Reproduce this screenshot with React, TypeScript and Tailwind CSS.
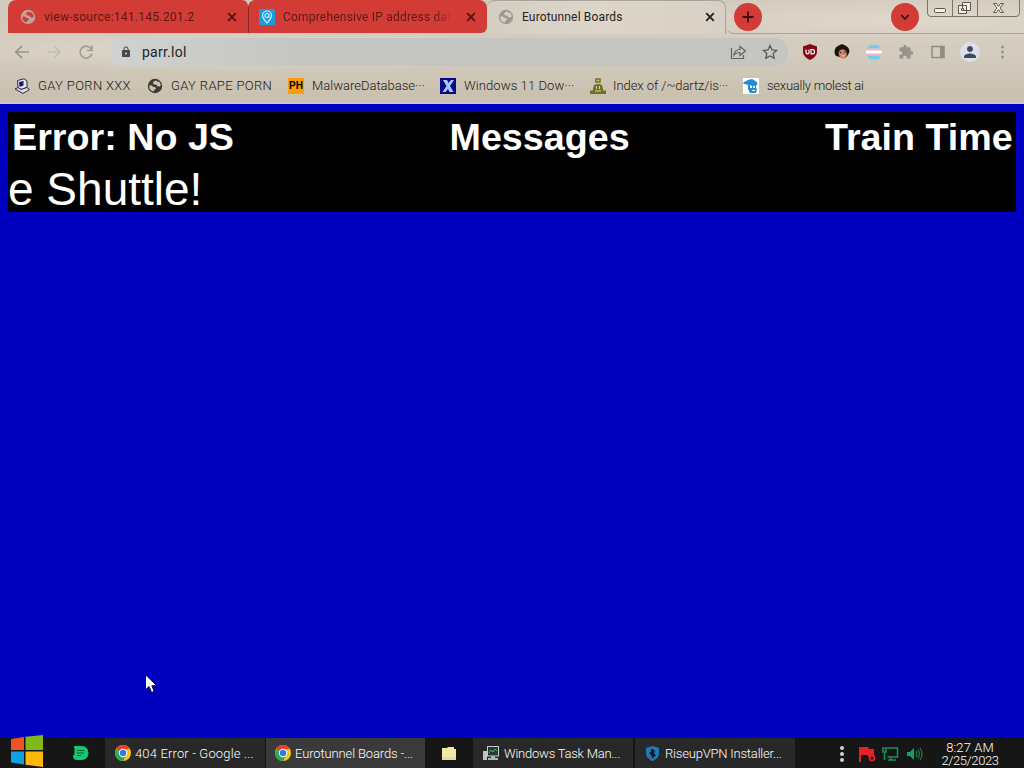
import React from "react";
import { MdExtension, MdPerson, MdLock } from "react-icons/md";

interface TextProps {
  children: React.ReactNode;
  className?: string;
}

function Label({ children, className = "" }: TextProps) {
  return (
    <span className={`block shrink-0 whitespace-nowrap ${className}`}>
      {children}
    </span>
  );
}

function CloseIcon({ className = "" }: { className?: string }) {
  return (
    <svg className={`w-[10px] h-[10px] shrink-0 ${className}`} viewBox="0 0 10 10" stroke="currentColor" strokeWidth="1.8">
      <path d="M1.2 1.2l7.6 7.6M8.8 1.2l-7.6 7.6" />
    </svg>
  );
}

function GlobeIcon({ className = "" }: { className?: string }) {
  return (
    <svg className={`w-4 h-4 shrink-0 ${className}`} viewBox="0 0 16 16" fill="currentColor">
      <path
        fillRule="evenodd"
        d="M8 .8a7.2 7.2 0 1 1 0 14.400A7.200 7.200 0 0 1 8 .8zM9.500 2.600L7 3.200 5.800 5.200l1.700 1.300 2 .2 1 1.600 2.200.2 1.100-1.200a5.700 5.700 0 0 0-2-3.800L10.500 4zM2.300 7.600a5.700 5.700 0 0 0 4.500 6l.4-1.500 1.800-1.300-.7-1.600-2.300-.4L4.800 7.600z"
      />
    </svg>
  );
}

function ChromeIcon() {
  return (
    <svg className="w-4 h-4 shrink-0" viewBox="0 0 16 16">
      <circle cx="8" cy="8" r="8" fill="#f8c51c" />
      <path d="M8 8L1.1 4A8 8 0 0 1 14.9 4L8 4.4z" fill="#e3402f" />
      <path d="M1.1 4A8 8 0 0 0 8 16L11.3 10 8 8 4.5 9.8z" fill="#2da94f" />
      <path d="M1.1 4L4.6 10 8 8z" fill="#2da94f" />
      <circle cx="8" cy="8" r="4.2" fill="#fff" />
      <circle cx="8" cy="8" r="3.2" fill="#3479e0" />
    </svg>
  );
}

function TabStrip() {
  return (
    <div className="relative flex h-[34px] shrink-0">
      <div className="flex items-center w-[240px] h-[33px] ml-2 pl-[12px] rounded-tl-lg rounded-tr-md bg-[#d33b36]">
        <GlobeIcon className="text-[#b9a79e]" />
        <Label className="ml-[8px] w-[174px] text-[12px] tracking-[0.27px] text-[#5c1a14]">
          view-source:141.145.201.2
        </Label>
        <CloseIcon className="ml-[9px] text-[#52150f]" />
      </div>
      <div className="flex items-center w-[239px] h-[33px] pl-[10px] rounded-t-lg rounded-br-md bg-[#d33b36] border-l border-[#8b2a24]">
        <svg className="w-4 h-4 shrink-0" viewBox="0 0 16 16">
          <rect width="16" height="16" rx="1" fill="#1b9cdc" />
          <path d="M8 14C5 10.500 3.500 9 3.500 6.500a4.500 4.500 0 0 1 9 0C12.500 9 11 10.500 8 14z" fill="none" stroke="#d8f1fb" strokeWidth="1.200" />
          <circle cx="8" cy="6.500" r="2" fill="none" stroke="#d8f1fb" strokeWidth="1.200" />
        </svg>
        <Label className="ml-[8px] w-[169px] text-[12px] tracking-[0.2px] bg-linear-to-r from-[#5c1a14] from-90% to-[#d33b36] bg-clip-text text-transparent">
          Comprehensive IP address dat
        </Label>
        <CloseIcon className="ml-[14px] text-[#52150f]" />
      </div>
      <div className="flex items-center w-[239px] h-[34px] pl-[11px] pb-px rounded-t-lg border-t border-r border-[#aaa59a] bg-linear-to-r from-[#d4cec3] via-[#ded5c9] to-[#d8d0c4]">
        <GlobeIcon className="text-[#9a9993]" />
        <Label className="ml-[8px] w-[175px] text-[12px] tracking-[0.15px] text-[#25221e]">
          Eurotunnel Boards
        </Label>
        <CloseIcon className="ml-[8px] text-[#211e1b]" />
      </div>
      <div className="flex grow h-[34px] border-b border-[#aaa59a] rounded-bl-lg">
        <div className="w-7 h-7 mt-[3px] ml-[8px] rounded-full bg-[#d33b36] flex items-center justify-center">
          <svg className="w-3 h-3" viewBox="0 0 12 12" stroke="#3a110e" strokeWidth="1.800">
            <path d="M6 .5v11M.5 6h11" />
          </svg>
        </div>
        <div className="w-7 h-7 mt-[3px] ml-[129px] rounded-full bg-[#d33b36] flex items-center justify-center">
          <svg className="w-[10px] h-[10px]" viewBox="0 0 10 10" fill="none" stroke="#3a110e" strokeWidth="1.600">
            <path d="M1.200 3l3.800 4 3.800-4" />
          </svg>
        </div>
        <svg className="w-[93px] h-[18px] ml-[8px] shrink-0" viewBox="0 0 93 18" fill="none" stroke="#7a756b">
          <path d="M.5 0v13q0 3.500 3.500 3.500h85q3.500 0 3.500-3.500V0M25.500 0v16M50.500 0v16" />
          <g stroke="#5b5750" fill="#f3efe8">
            <rect x="7.500" y="8.500" width="11" height="4" rx="1" />
            <path d="M35.500 2.500h8v8h-8zM31.500 5.500h8v8h-8z" />
            <path d="M34.500 8.500h2v2h-2z" />
            <path d="M66.500 3.500h3l2 3 2-3h3l-3.500 4.500 3.500 4.500h-3l-2-3-2 3h-3l3.500-4.500z" />
          </g>
        </svg>
      </div>
    </div>
  );
}

function Toolbar() {
  return (
    <div className="flex items-center h-9 shrink-0">
      <svg className="w-[80px] h-4 ml-[14px] shrink-0" viewBox="0 0 80 16" fill="none" strokeWidth="1.700">
        <path d="M15 8H2M8 1.800L1.800 8 8 14.200" stroke="#99958c" />
        <path d="M34 8h12M40.500 2.500L46 8l-5.500 5.500" stroke="#c1bbb0" />
        <path d="M77.300 5A6 6 0 1 0 78 9.500M78 1.500v5h-5" stroke="#a39e95" />
      </svg>
      <div className="flex items-center w-[678px] h-7 ml-4 pl-[10px] rounded-full bg-linear-to-r from-[#d0d2d1] to-[#c5c6c2] to-30%">
        <MdLock className="w-3 h-[14px] shrink-0 text-[#45484b]" />
        <Label className="ml-[10px] w-[586px] pt-px text-[14px] tracking-[0.25px] text-[#222325]">parr.lol</Label>
        <svg className="w-[17px] h-4 ml-[2px] shrink-0" viewBox="0 0 17 16" fill="none" stroke="#63645f" strokeWidth="1.200">
          <path d="M1.500 4v10.500h12V11" />
          <path d="M4 11c.5-4 3-5.500 6-5.500V2.500l5.500 4.500-5.500 4.500V8.500c-3 0-4.500.5-6 2.500z" />
        </svg>
        <svg className="w-4 h-4 ml-[15px] shrink-0" viewBox="0 0 16 16" fill="none" stroke="#575852" strokeWidth="1.300">
          <path d="M8 1.500l2 4.400 4.700.5-3.500 3.200 1 4.700L8 11.900l-4.200 2.400 1-4.700L1.300 6.400 6 5.900z" />
        </svg>
      </div>
      <div className="flex items-center gap-4 ml-[14px]">
        <svg className="w-4 h-4" viewBox="0 0 16 16">
          <path d="M8 0l7 2.500v5c0 4-3 6.500-7 8.500-4-2-7-4.500-7-8.500v-5z" fill="#850814" />
          <path d="M4 5.500v3q0 1.300 1.500 1.300T7 8.500v-3m2 0h1.500q2 0 2 2.200t-2 2.100H9z" fill="none" stroke="#fff" strokeWidth="1.200" />
        </svg>
        <svg className="w-4 h-4" viewBox="0 0 16 16">
          <path d="M2 12C-1 8 1 3 4 2q4-3.500 8 0 5 3 2.500 8-1 3-4.500 4z" fill="#20130e" />
          <ellipse cx="8.500" cy="10" rx="4" ry="5" fill="#c98566" transform="rotate(-15 8 9)" />
          <path d="M4 7.500q3-3 8-2l-1-2H5z" fill="#20130e" />
          <path d="M5.800 8.500h1.500m2.700-.5h1.500" stroke="#2b140e" />
          <path d="M7 11.500q2.500 1 4-.8-1 3-4 .8z" fill="#fff" />
        </svg>
        <svg className="w-4 h-4" viewBox="0 0 16 16">
          <path d="M3.500 1h9l2 3.500h-13zM1.500 12h13l-2 3.500h-9z" fill="#76ccec" />
          <path d="M.5 4.500h15v2.500H.5zM.5 9.500h15V12H.5z" fill="#efb4cb" />
          <path d="M0 6.500h16v3H0z" fill="#fff" />
        </svg>
        <MdExtension className="w-4 h-4 text-[#99948b]" />
        <svg className="w-4 h-4" viewBox="0 0 16 16">
          <rect x="2" y="2.500" width="12" height="11" fill="none" stroke="#918d86" strokeWidth="1.500" />
          <path d="M10 2.500h4v11h-4z" fill="#918d86" />
        </svg>
        <div className="w-5 h-5 -mx-[2px] rounded-full bg-[#dcdfe6] flex items-center justify-center">
          <MdPerson className="w-[18px] h-[18px] text-[#414763]" />
        </div>
        <svg className="w-4 h-4" viewBox="0 0 16 16" fill="#98938a">
          <circle cx="8.500" cy="3" r="1.500" />
          <circle cx="8.500" cy="8" r="1.500" />
          <circle cx="8.500" cy="13" r="1.500" />
        </svg>
      </div>
    </div>
  );
}

function Bookmarks() {
  return (
    <div className="flex items-center h-[31px] pl-[14px] shrink-0 text-[13px] font-light text-[#1d1813]">
      <svg className="w-4 h-4 shrink-0" viewBox="0 0 16 16">
        <path d="M3.500 2.500L10 .8l3 2.200v6.500l-6 2-3-2z" fill="#e6e4ed" stroke="#302e37" />
        <path d="M5 4l4.500-1v4.500L5.500 9z" fill="#1d1b78" />
        <path d="M1 11l3-1.500 3 2 6-2 2.500 2-6.500 4z" fill="#dcdae4" stroke="#302e37" />
      </svg>
      <Label className="ml-2 w-[93px] tracking-[0.35px]">GAY PORN XXX</Label>
      <GlobeIcon className="ml-4 text-[#3e3a36]" />
      <Label className="ml-2 w-[101px] tracking-[0.35px]">GAY RAPE PORN</Label>
      <div className="w-4 h-4 ml-4 shrink-0 bg-[#f99e0b] text-black text-[10px] font-bold leading-4 text-center font-['Liberation_Sans']">
        PH
      </div>
      <Label className="ml-2 w-[114px] tracking-[0px]">MalwareDatabase···</Label>
      <svg className="w-4 h-4 ml-[14px] shrink-0" viewBox="0 0 16 16">
        <rect width="16" height="16" fill="#09098c" />
        <path d="M3 2h4l1.500 3L11 2h3L10 8l3.500 6h-4L8 11l-2.500 3H2.500l4-6z" fill="#a8c7ff" />
      </svg>
      <Label className="ml-2 w-[112px] tracking-[0.1px]">Windows 11 Dow···</Label>
      <svg className="w-4 h-4 ml-[14px] shrink-0" viewBox="0 0 16 16">
        <path d="M0 16v-3.500h3V11l1-4q4-2 8 0l1 4v1.500h3V16z" fill="#75701c" />
        <path d="M6 1h4v3H6z" fill="none" stroke="#75701c" strokeWidth="1.500" />
        <path d="M6 8h1v3H6zM9 8h1v3H9zM5 12.500h6v1H5z" fill="#ddd5b5" />
      </svg>
      <Label className="ml-[7px] w-[116px] tracking-[-0.06px]">Index of /~dartz/is···</Label>
      <svg className="w-4 h-4 ml-[14px] shrink-0" viewBox="0 0 16 16">
        <rect width="16" height="16" fill="#fff" />
        <path d="M1 4l4-2 4-1 5 3 .5 3H13v3l1 1-1 4H7l-2-4V7L0 5.500z" fill="#2489d7" />
        <path d="M7 7l2 1v2H7zM10 8h2v2h-2zM9 12h3v1H9z" fill="#fff" />
      </svg>
      <Label className="ml-2 w-[110px] tracking-[-0.25px]">sexually molest ai</Label>
    </div>
  );
}

function Board() {
  return (
    <main className="grow px-2 pt-2 bg-[#0000c0] text-white font-['Liberation_Sans',sans-serif]">
      <div className="h-[100px] bg-black">
        <div className="flex justify-between h-[51px] pl-1 pr-[3px] text-[37.7px] leading-[51px] font-bold whitespace-nowrap">
          <span className="w-[223px]">Error: No JS</span>
          <span className="w-[181px] ml-[20px]">Messages</span>
          <span className="w-[188px]">Train Time</span>
        </div>
        <div className="h-[49px] text-[46px] leading-[52px] whitespace-nowrap">e Shuttle!</div>
      </div>
    </main>
  );
}

function Taskbar() {
  return (
    <footer className="relative flex items-center h-[30px] shrink-0 bg-[#161616] text-white text-[13px]">
      <svg className="w-8 h-8 ml-[11px] -mt-[4px] shrink-0" viewBox="0 0 32 32">
        <path d="M0 4l13-2v13H0z" fill="#eb5428" />
        <path d="M14.500 1.800L32 0v15H14.500z" fill="#80b719" />
        <path d="M0 16.500h13v13L0 27.500z" fill="#11a0e5" />
        <path d="M14.500 16.500H32V32l-17.500-2.300z" fill="#fdb909" />
      </svg>
      <svg className="w-4 h-[14px] ml-[30px] shrink-0" viewBox="0 0 16 14">
        <path d="M1 0h8a6.500 7 0 0 1 0 14H4q-4 0-4-4l1.500-2V4z" fill="#14c871" />
        <path d="M4 4.500h7M4 7h7M4 9.500h4" stroke="#145234" strokeWidth="1.200" />
      </svg>
      <div className="flex items-center w-[160px] h-full ml-[16px] pl-[10px] bg-[#282829]">
        <ChromeIcon />
        <Label className="ml-[4px] w-[125px] pt-px font-light tracking-[0.15px]">404 Error - Google ...</Label>
      </div>
      <div className="flex items-center w-[159px] h-full ml-px pl-[9px] bg-[#3a3a3b]">
        <ChromeIcon />
        <Label className="ml-[4px] w-[125px] pt-px font-light tracking-[-0.13px]">Eurotunnel Boards -...</Label>
      </div>
      <svg className="w-[14px] h-[13px] ml-[17px] shrink-0" viewBox="0 0 14 13">
        <path d="M0 1h5l1-1h6v2h2v11H0z" fill="#f1e7a7" />
        <path d="M0 10h14v3H0z" fill="#d6dfb1" />
      </svg>
      <div className="flex items-center w-[160px] h-full ml-[17px] pl-[10px] bg-[#282829]">
        <svg className="w-4 h-[15px] shrink-0" viewBox="0 0 16 15">
          <path d="M0 5h4v9H0z" fill="#bfc3c3" />
          <rect x="4.500" y=".5" width="11" height="9.500" fill="#263b35" stroke="#c6cccb" />
          <path d="M6 7l2-3 2 2 2-3 2 2" stroke="#4bb35d" fill="none" />
          <path d="M8 10h4v2h3v2H5v-2h3z" fill="#b0b4b4" />
        </svg>
        <Label className="ml-[5px] w-[125px] pt-px font-light tracking-[-0.23px]">Windows Task Man...</Label>
      </div>
      <div className="flex items-center w-[160px] h-full ml-[2px] pl-[11px] bg-[#282829]">
        <svg className="w-[13px] h-[15px] shrink-0" viewBox="0 0 13 15">
          <path d="M6.500 0L13 2v5c0 4-3 6.500-6.500 8C3 13.500 0 11 0 7V2z" fill="#2478b5" />
          <path d="M5 2.500l4 2-1 2 2 4-2-.5-1 3-2-4-2-2 2-1z" fill="#071821" />
        </svg>
        <Label className="ml-[6px] w-[125px] pt-px font-light tracking-[-0.2px]">RiseupVPN Installer...</Label>
      </div>
      <svg className="w-[6px] h-[18px] ml-[44px] mt-[2px] shrink-0" viewBox="0 0 6 18" fill="#d0d0d0">
        <circle cx="3" cy="3" r="2" />
        <circle cx="3" cy="9" r="2" />
        <circle cx="3" cy="15" r="2" />
      </svg>
      <svg className="w-[66px] h-[18px] ml-[13px] mt-px shrink-0" viewBox="0 0 66 18">
        <path d="M1 2h2v15H1zM3 2h7l1 2h5v7h-2l-3 1-2-2H3z" fill="#e72025" />
        <circle cx="14" cy="13" r="2.500" fill="#161616" stroke="#e72025" strokeWidth="1.800" />
        <path d="M29 3h10.500v9H29.500M33 12v3m-3 0h8M25 3h3v4h-3zM26.500 7v8" fill="none" stroke="#169257" strokeWidth="1.500" />
        <path d="M49 7h3l4-4v12l-4-4h-3z" fill="#15a15f" />
        <path d="M58 6q2 3 0 6M60 4.500q3 4.500 0 9M62 3q4 6 0 12" fill="none" stroke="#15824f" strokeWidth="1.200" />
      </svg>
      <div className="w-[70px] ml-[11px] text-center text-[13px] leading-[13px] pt-[1px] font-light whitespace-nowrap">
        <div className="tracking-[0.1px]">8:27 AM</div>
        <div className="tracking-[-0.4px]">2/25/2023</div>
      </div>
    </footer>
  );
}

export default function App() {
  return (
    <div className="relative flex flex-col w-[1024px] h-[768px] overflow-hidden font-[Roboto,sans-serif]">
      <header className="flex flex-col h-[104px] shrink-0 border-b-2 border-[#c9c8d2] bg-[radial-gradient(ellipse_at_25%_50%,#ded8cb_0,transparent_30%),radial-gradient(ellipse_at_88%_20%,#dfd8cb_0,transparent_22%),linear-gradient(180deg,#d1cabd,#d4ccbf_50%,#c8bfae)]">
        <TabStrip />
        <Toolbar />
        <Bookmarks />
      </header>
      <Board />
      <Taskbar />
      {/* Mouse pointer */}
      <svg className="absolute left-[145px] top-[674px] w-[13px] h-5" viewBox="0 0 13 20">
        <path d="M.5.8v15l3.500-3.300L6.600 18.500l2.600-1.200L6.800 11.700h5z" fill="#fff" stroke="#06063f" />
      </svg>
    </div>
  );
}
